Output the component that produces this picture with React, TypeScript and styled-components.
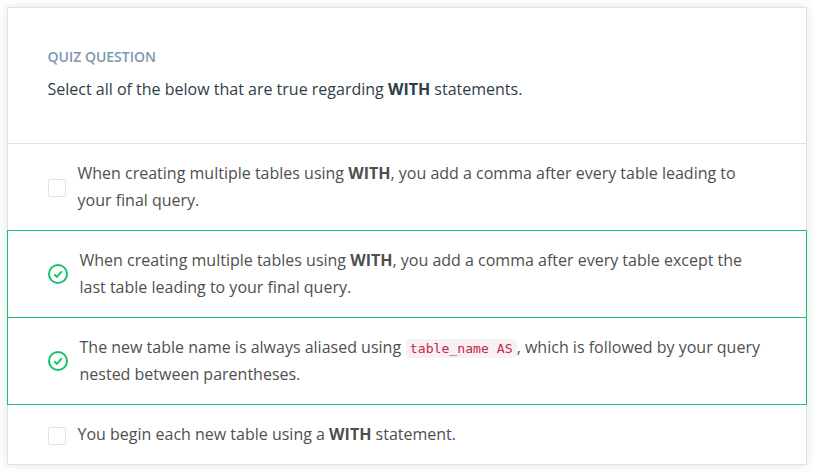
import React from "react";
import styled, { createGlobalStyle } from "styled-components";

const GlobalStyle = createGlobalStyle`
  *, *::before, *::after { box-sizing: border-box; }
  body {
    margin: 0;
    background: #fff;
    font-family: "Open Sans", Helvetica, sans-serif;
  }
`;

const Page = styled.main`
  padding: 7px;
`;

const Card = styled.section`
  width: 800px;
  border: 1px solid #dbe2e8;
  background: #fff;
  box-shadow: 0 0 10px rgba(46, 61, 73, 0.14);
`;

const Header = styled.header`
  height: 136px;
  padding: 40px 39.5px 0;
  border-bottom: 1px solid #dbe2e8;
`;

const Title = styled.h3`
  margin: 0 0 10px;
  font-size: 14px;
  line-height: 18px;
  font-weight: 600;
  color: #7d97ad;
  text-transform: uppercase;
`;

const Question = styled.p`
  margin: 0;
  font-size: 16px;
  line-height: 27px;
  color: #2e3d49;
`;

/* The list spills over the card's edges by one pixel so row borders overlap them. */
const Options = styled.ul`
  display: flex;
  flex-direction: column;
  margin: -1px;
  padding: 0;
  list-style: none;
`;

const Option = styled.li<{ $correct: boolean }>`
  display: flex;
  align-items: center;
  gap: 11.5px;
  padding: 16px 40px;
  border: 1px solid ${(p) => (p.$correct ? "#15c26b" : "transparent")};

  &:not(:first-child) {
    margin-top: -1px;
  }
`;

const Checkbox = styled.span`
  flex: none;
  width: 18px;
  height: 18px;
  margin-top: 2px;
  border: 1px solid #dbe2e8;
  border-radius: 2px;
`;

const CheckIcon = styled.svg`
  flex: none;
  width: 20px;
  height: 20px;
  fill: none;
  stroke: #15c26b;
  stroke-width: 2;
`;

const Label = styled.p`
  margin: 0;
  font-size: 16px;
  line-height: 27px;
  color: #4f4f4f;
`;

const Code = styled.code`
  margin-left: 0.6px;
  padding: 2px 4px;
  border-radius: 4px;
  background: #f7f1f3;
  color: #c7254e;
  font-family: "DejaVu Sans Mono", monospace;
  font-size: 13.15px;
  line-height: 1;
`;

const options: { correct: boolean; text: React.ReactNode }[] = [
  {
    correct: false,
    text: (
      <>
        When creating multiple tables using <b>WITH</b>, you add a comma after every table leading to
        <br />
        your final query.
      </>
    ),
  },
  {
    correct: true,
    text: (
      <>
        When creating multiple tables using <b>WITH</b>, you add a comma after every table except the
        <br />
        last table leading to your final query.
      </>
    ),
  },
  {
    correct: true,
    text: (
      <>
        The new table name is always aliased using <Code>table_name AS</Code>, which is followed by your query
        <br />
        nested between parentheses.
      </>
    ),
  },
  {
    correct: false,
    text: (
      <>
        You begin each new table using a <b>WITH</b> statement.
      </>
    ),
  },
];

export default function App() {
  return (
    <>
      <GlobalStyle />
      <Page>
        <Card>
          <Header>
            <Title>Quiz Question</Title>
            <Question>
              Select all of the below that are true regarding <b>WITH</b> statements.
            </Question>
          </Header>
          <Options>
            {options.map((option, i) => (
              <Option key={i} $correct={option.correct}>
                {option.correct ? (
                  <CheckIcon viewBox="0 0 20 20">
                    <circle cx="10" cy="10" r="9" />
                    <path d="M6.3 10.4l2.6 2.5 4.9-5.5" />
                  </CheckIcon>
                ) : (
                  <Checkbox />
                )}
                <Label>{option.text}</Label>
              </Option>
            ))}
          </Options>
        </Card>
      </Page>
    </>
  );
}
